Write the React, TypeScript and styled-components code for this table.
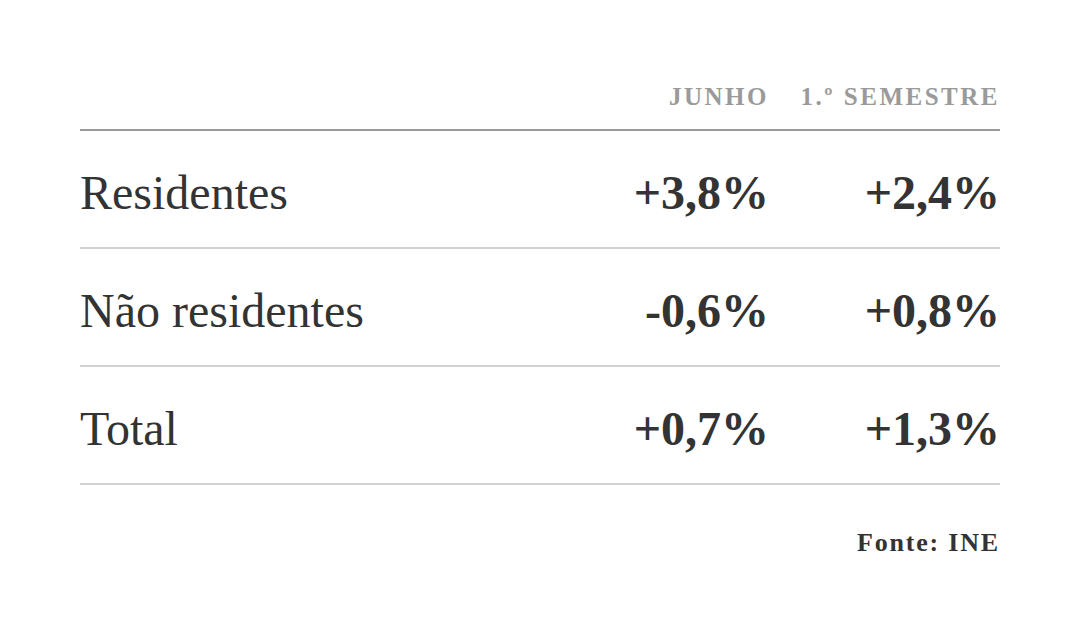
import styled, { createGlobalStyle } from 'styled-components';

const GlobalStyle = createGlobalStyle`
  html, body {
    margin: 0;
    padding: 0;
    background: #ffffff;
  }
  body {
    font-family: 'Liberation Serif', 'DejaVu Serif', serif;
    color: #333333;
  }
`;

const Page = styled.div`
  width: 1080px;
  height: 640px;
  padding: 84px 80px 0 80px;
  box-sizing: border-box;
`;

const Table = styled.div`
  width: 920px;
  display: flex;
  flex-direction: column;
`;

const grid = `
  display: grid;
  grid-template-columns: 1fr 200px 231px;
  align-items: baseline;
`;

const HeaderRow = styled.div`
  ${grid}
  padding-bottom: 20px;
  border-bottom: 2px solid #999999;
`;

const HeaderCell = styled.div`
  text-align: right;
  font-size: 25px;
  line-height: 1;
  font-weight: 700;
  letter-spacing: 2.5px;
  text-transform: uppercase;
  color: #9a9a9a;
`;

const Row = styled.div`
  ${grid}
  padding: 38px 0 30px 0;
  border-bottom: 2px solid #d2d2d2;
`;

const Label = styled.div`
  font-size: 48px;
  line-height: 1;
  font-weight: 400;
  color: #333333;
`;

const Value = styled.div`
  text-align: right;
  font-size: 48px;
  line-height: 1;
  font-weight: 700;
  color: #333333;
`;

const Source = styled.div`
  margin-top: 45px;
  text-align: right;
  font-size: 26px;
  line-height: 1;
  font-weight: 700;
  letter-spacing: 1.8px;
  color: #333333;
`;

type Line = { label: string; month: string; half: string };

const lines: Line[] = [
  { label: 'Residentes', month: '+3,8%', half: '+2,4%' },
  { label: 'Não residentes', month: '-0,6%', half: '+0,8%' },
  { label: 'Total', month: '+0,7%', half: '+1,3%' },
];

export default function App() {
  return (
    <>
      <GlobalStyle />
      <Page>
        <Table>
          <HeaderRow>
            <div />
            <HeaderCell>Junho</HeaderCell>
            <HeaderCell>1.º Semestre</HeaderCell>
          </HeaderRow>
          {lines.map(line => (
            <Row key={line.label}>
              <Label>{line.label}</Label>
              <Value>{line.month}</Value>
              <Value>{line.half}</Value>
            </Row>
          ))}
          <Source>Fonte: INE</Source>
        </Table>
      </Page>
    </>
  );
}
